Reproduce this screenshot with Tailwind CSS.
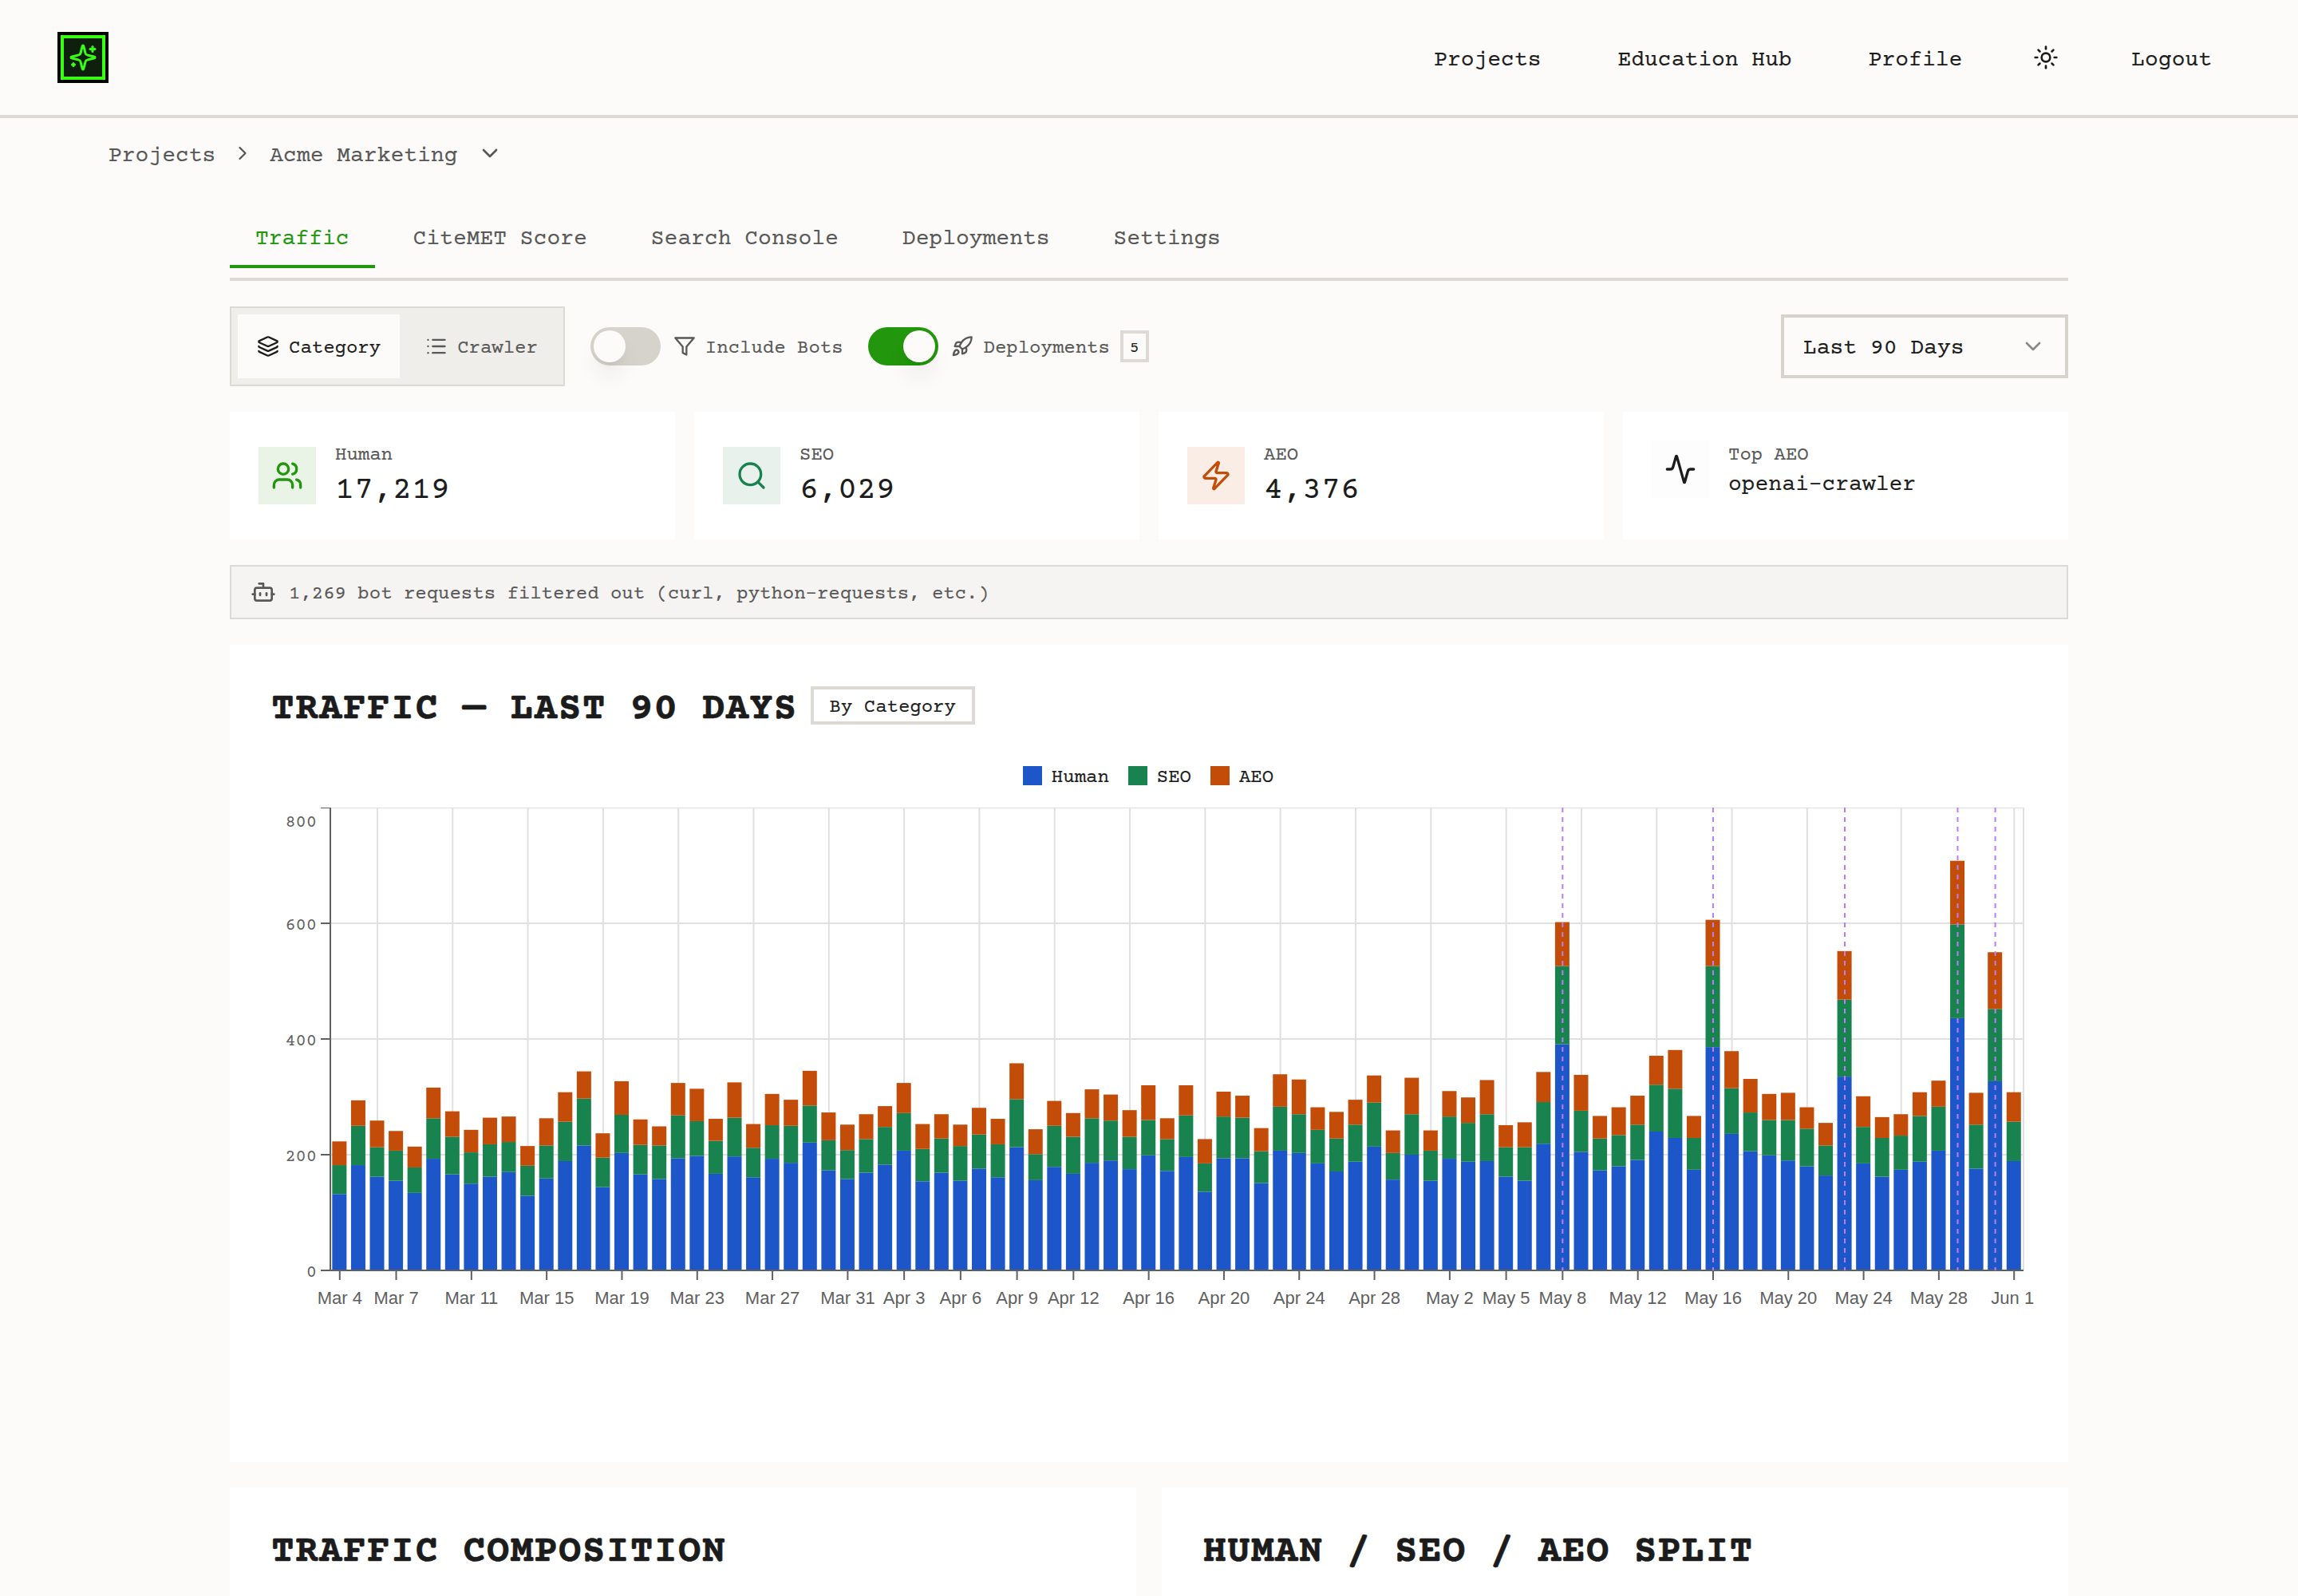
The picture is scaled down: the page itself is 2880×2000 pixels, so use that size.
<!DOCTYPE html>
<html lang="en">
<head>
  <meta charset="UTF-8">
  <meta name="viewport" content="width=device-width, initial-scale=1.0">
  <title>Acme Marketing - Traffic</title>
  <script src="https://cdn.jsdelivr.net/npm/@tailwindcss/browser@4"></script>
</head>
<body class="h-[2000px] overflow-hidden bg-[#fcfbf9] font-['Courier_Prime','Liberation_Mono',monospace] text-[28px] text-[#1c1c1c] [-webkit-text-stroke:0.15px]">

  <header class="flex h-37 items-center justify-between border-b-4 border-[#dddad5] pr-[76px] pl-18">
    <a class="block size-16 bg-black p-1" href="#">
      <div class="flex size-14 items-center justify-center border-4 border-[#39ff14] bg-[#0f1f0d]">
        <svg class="size-9 shrink-0 text-[#39ff14]" viewBox="0 0 24 24" fill="none" stroke="currentColor" stroke-width="2" stroke-linecap="round" stroke-linejoin="round"><path d="M9.937 15.5A2 2 0 0 0 8.5 14.063l-6.135-1.582a.5.5 0 0 1 0-.962L8.5 9.936A2 2 0 0 0 9.937 8.5l1.582-6.135a.5.5 0 0 1 .963 0L14.063 8.5A2 2 0 0 0 15.5 9.937l6.135 1.581a.5.5 0 0 1 0 .964L15.5 14.063a2 2 0 0 0-1.437 1.437l-1.582 6.135a.5.5 0 0 1-.963 0z"/><path d="M20 3v4"/><path d="M22 5h-4"/><path d="M4 17v2"/><path d="M5 18H3"/></svg>
      </div>
    </a>
    <nav class="flex items-center gap-8 leading-10">
      <a class="px-8 pt-[7px]" href="#">Projects</a>
      <a class="px-8 pt-[7px]" href="#">Education Hub</a>
      <a class="px-8 pt-[7px]" href="#">Profile</a>
      <button class="flex w-21 justify-center pr-0.5">
        <svg class="size-8" viewBox="0 0 24 24" fill="none" stroke="currentColor" stroke-width="2" stroke-linecap="round" stroke-linejoin="round"><circle cx="12" cy="12" r="4"/><path d="M12 2v2"/><path d="M12 20v2"/><path d="m4.93 4.93 1.41 1.41"/><path d="m17.66 17.66 1.41 1.41"/><path d="M2 12h2"/><path d="M20 12h2"/><path d="m6.34 17.66-1.41 1.41"/><path d="m19.07 4.93-1.41 1.41"/></svg>
      </button>
      <a class="px-8 pt-[7px]" href="#">Logout</a>
    </nav>
  </header>

  <div class="flex h-22 items-center pl-34 leading-10 text-[#585858]">
    <a class="pt-[7px]" href="#">Projects</a>
    <svg class="mx-5 size-7" viewBox="0 0 24 24" fill="none" stroke="currentColor" stroke-width="2" stroke-linecap="round" stroke-linejoin="round"><path d="m9 18 6-6-6-6"/></svg>
    <span class="pt-[7px]">Acme Marketing</span>
    <svg class="ml-[25px] size-8" viewBox="0 0 24 24" fill="none" stroke="currentColor" stroke-width="2" stroke-linecap="round" stroke-linejoin="round"><path d="m6 9 6 6 6-6"/></svg>
  </div>

  <main class="mx-auto w-[2304px]">
    <div class="flex h-29 items-end gap-4 border-b-4 border-[#dddad5] pb-3 leading-10 text-[#585858]">
      <a class="border-b-4 border-[#22960d] px-8 pb-3 text-[#22960d]" href="#">Traffic</a>
      <a class="border-b-4 border-transparent px-8 pb-3" href="#">CiteMET Score</a>
      <a class="border-b-4 border-transparent px-8 pb-3" href="#">Search Console</a>
      <a class="border-b-4 border-transparent px-8 pb-3" href="#">Deployments</a>
      <a class="border-b-4 border-transparent px-8 pb-3" href="#">Settings</a>
    </div>

    <div class="mt-8 flex h-25 items-center text-2xl text-[#585858]">
      <div class="flex h-25 gap-2 border-2 border-[#dbdad4] bg-[#efeeea] p-2">
        <button class="flex items-center gap-3 bg-[#fcfbf9] px-6 text-[#1c1c1c]">
          <svg class="size-7" viewBox="0 0 24 24" fill="none" stroke="currentColor" stroke-width="2" stroke-linecap="round" stroke-linejoin="round"><path d="M12.83 2.18a2 2 0 0 0-1.66 0L2.6 6.08a1 1 0 0 0 0 1.83l8.58 3.91a2 2 0 0 0 1.66 0l8.58-3.9a1 1 0 0 0 0-1.83z"/><path d="M2 12a1 1 0 0 0 .58.91l8.6 3.91a2 2 0 0 0 1.65 0l8.58-3.9A1 1 0 0 0 22 12"/><path d="M2 17a1 1 0 0 0 .58.91l8.6 3.91a2 2 0 0 0 1.65 0l8.58-3.9A1 1 0 0 0 22 17"/></svg>
          <span class="pt-[5px]">Category</span>
        </button>
        <button class="flex items-center gap-3 px-6">
          <svg class="size-7" viewBox="0 0 24 24" fill="none" stroke="currentColor" stroke-width="2" stroke-linecap="round" stroke-linejoin="round"><path d="M3 5h.01"/><path d="M3 12h.01"/><path d="M3 19h.01"/><path d="M8 5h13"/><path d="M8 12h13"/><path d="M8 19h13"/></svg>
          <span class="pt-[5px]">Crawler</span>
        </button>
      </div>

      <button class="ml-8 flex h-12 w-22 rounded-full bg-[#d5d3cb] p-1">
        <span class="size-10 rounded-full bg-[#fcfbf9] shadow-[0_20px_30px_-6px_rgb(0_0_0/0.1),0_8px_12px_-8px_rgb(0_0_0/0.1)]"></span>
      </button>
      <svg class="mr-3 ml-4 size-7" viewBox="0 0 24 24" fill="none" stroke="currentColor" stroke-width="2" stroke-linecap="round" stroke-linejoin="round"><path d="M22 3H2l8 9.46V19l4 2v-8.54L22 3z"/></svg>
      <span class="pt-[5px]">Include Bots</span>

      <button class="ml-[31px] flex h-12 w-22 justify-end rounded-full bg-[#22960d] p-1">
        <span class="size-10 rounded-full bg-[#fcfbf9] shadow-[0_20px_30px_-6px_rgb(0_0_0/0.1),0_8px_12px_-8px_rgb(0_0_0/0.1)]"></span>
      </button>
      <svg class="mr-[13px] ml-4 size-7" viewBox="0 0 24 24" fill="none" stroke="currentColor" stroke-width="2" stroke-linecap="round" stroke-linejoin="round"><path d="M4.5 16.5c-1.5 1.26-2 5-2 5s3.74-.5 5-2c.71-.84.7-2.13-.09-2.91a2.18 2.18 0 0 0-2.91-.09z"/><path d="m12 15-3-3a22 22 0 0 1 2-3.95A12.88 12.88 0 0 1 22 2c0 2.72-.78 7.5-6 11a22.35 22.35 0 0 1-4 2z"/><path d="M9 12H4s.55-3.03 2-4c1.62-1.08 5 0 5 0"/><path d="M12 15v5s3.03-.55 4-2c1.08-1.62 0-5 0-5"/></svg>
      <span class="pt-[5px]">Deployments</span>
      <span class="ml-[13px] flex h-10 items-center border-4 border-[#dddad5] px-2 pt-[5px] text-xl text-[#1c1c1c]">5</span>

      <button class="ml-auto flex h-20 w-90 items-center justify-between border-4 border-[#d5d3cb] px-6 text-[28px] text-[#1c1c1c]">
        <span class="pt-2">Last 90 Days</span>
        <svg class="size-8 text-[#888]" viewBox="0 0 24 24" fill="none" stroke="currentColor" stroke-width="2" stroke-linecap="round" stroke-linejoin="round"><path d="m6 9 6 6 6-6"/></svg>
      </button>
    </div>

    <div class="mt-8 grid h-40 grid-cols-4 gap-6">
      <div class="bg-white p-9">
        <div class="flex items-center gap-6">
          <div class="flex size-18 items-center justify-center bg-[#e9f4e7] text-[#22960d]">
            <svg class="size-10" viewBox="0 0 24 24" fill="none" stroke="currentColor" stroke-width="2" stroke-linecap="round" stroke-linejoin="round"><path d="M16 21v-2a4 4 0 0 0-4-4H6a4 4 0 0 0-4 4v2"/><circle cx="9" cy="7" r="4"/><path d="M22 21v-2a4 4 0 0 0-3-3.87"/><path d="M16 3.13a4 4 0 0 1 0 7.75"/></svg>
          </div>
          <div>
            <p class="h-8 text-2xl leading-[37px] text-[#585858]">Human</p>
            <p class="h-14 text-[40px] leading-[63px]">17,219</p>
          </div>
        </div>
      </div>
      <div class="bg-white p-9">
        <div class="flex items-center gap-6">
          <div class="flex size-18 items-center justify-center bg-[#e8f1ec] text-[#18834f]">
            <svg class="size-10" viewBox="0 0 24 24" fill="none" stroke="currentColor" stroke-width="2" stroke-linecap="round" stroke-linejoin="round"><circle cx="11" cy="11" r="8"/><path d="m21 21-4.3-4.3"/></svg>
          </div>
          <div>
            <p class="h-8 text-2xl leading-[37px] text-[#585858]">SEO</p>
            <p class="h-14 text-[40px] leading-[63px]">6,029</p>
          </div>
        </div>
      </div>
      <div class="bg-white p-9">
        <div class="flex items-center gap-6">
          <div class="flex size-18 items-center justify-center bg-[#faede6] text-[#c34c09]">
            <svg class="size-10" viewBox="0 0 24 24" fill="none" stroke="currentColor" stroke-width="2" stroke-linecap="round" stroke-linejoin="round"><path d="M4 14a1 1 0 0 1-.78-1.63l9.9-10.2a.5.5 0 0 1 .86.46l-1.92 6.02A1 1 0 0 0 13 10h7a1 1 0 0 1 .78 1.63l-9.9 10.2a.5.5 0 0 1-.86-.46l1.92-6.02A1 1 0 0 0 11 14z"/></svg>
          </div>
          <div>
            <p class="h-8 text-2xl leading-[37px] text-[#585858]">AEO</p>
            <p class="h-14 text-[40px] leading-[63px]">4,376</p>
          </div>
        </div>
      </div>
      <div class="bg-white p-9">
        <div class="flex items-center gap-6">
          <div class="flex size-18 items-center justify-center bg-[#fefdfd]">
            <svg class="size-10" viewBox="0 0 24 24" fill="none" stroke="currentColor" stroke-width="2" stroke-linecap="round" stroke-linejoin="round"><path d="M22 12h-2.48a2 2 0 0 0-1.93 1.46l-2.35 8.36a.25.25 0 0 1-.48 0L9.24 2.18a.25.25 0 0 0-.48 0l-2.35 8.36A2 2 0 0 1 4.49 12H2"/></svg>
          </div>
          <div>
            <p class="h-8 text-2xl leading-[37px] text-[#585858]">Top AEO</p>
            <p class="h-10 leading-[48px]">openai-crawler</p>
          </div>
        </div>
      </div>
    </div>

    <div class="mt-8 flex h-17 items-center gap-4 border-2 border-[#dbdad4] bg-[#f5f4f2] px-6 text-2xl text-[#585858]">
      <svg class="size-8" viewBox="0 0 24 24" fill="none" stroke="currentColor" stroke-width="2" stroke-linecap="round" stroke-linejoin="round"><path d="M12 8V4H8"/><rect width="16" height="12" x="4" y="8" rx="2"/><path d="M2 14h2"/><path d="M20 14h2"/><path d="M15 13v2"/><path d="M9 13v2"/></svg>
      <span class="pt-[5px]">1,269 bot requests filtered out (curl, python-requests, etc.)</span>
    </div>

    <section class="mt-8 h-[1024px] bg-white p-13">
      <div class="flex h-12 items-start gap-4">
        <h2 class="text-5xl leading-[59px] font-bold tracking-wide [-webkit-text-stroke:0.5px]">TRAFFIC — LAST 90 DAYS</h2>
        <span class="flex h-12 items-center border-4 border-[#dddad5] px-5 pt-[5px] text-2xl">By Category</span>
      </div>
      <div class="mt-[52px] flex h-6 items-center justify-center gap-6 pr-0.5 text-2xl">
        <span class="flex items-center gap-3"><i class="size-6 bg-[#1d56c9]"></i><span class="pt-[5px]">Human</span></span>
        <span class="flex items-center gap-3"><i class="size-6 bg-[#18834f]"></i><span class="pt-[5px]">SEO</span></span>
        <span class="flex items-center gap-3"><i class="size-6 bg-[#c34c09]"></i><span class="pt-[5px]">AEO</span></span>
      </div>
      <svg id="chart" class="mt-4 block overflow-visible" width="2200" height="660" viewBox="340 1000 2200 660"></svg>
    </section>

    <div class="mt-8 grid grid-cols-2 gap-8">
      <section class="h-34 bg-white px-13 pt-13">
        <h2 class="text-5xl leading-[59px] font-bold tracking-wide [-webkit-text-stroke:0.5px]">TRAFFIC COMPOSITION</h2>
      </section>
      <section class="h-34 bg-white px-13 pt-13">
        <h2 class="text-5xl leading-[59px] font-bold tracking-wide [-webkit-text-stroke:0.5px]">HUMAN / SEO / AEO SPLIT</h2>
      </section>
    </div>
  </main>

  <script>
    // one entry per day from Mar 4: human, seo, aeo
    var days = [
      [132,50,41],[182,68,44],[162,51,46],[155,52,34],[134,44,36],[193,70,53],[166,65,44],[150,54,39],[162,56,46],[170,52,44],
      [129,52,34],[159,57,47],[189,68,51],[216,81,47],[144,51,42],[203,66,58],[166,51,44],[158,58,33],[194,74,56],[198,60,56],
      [167,57,38],[197,67,61],[161,51,41],[193,58,54],[186,64,45],[221,64,60],[173,52,48],[158,50,44],[169,58,43],[183,65,36],
      [207,65,52],[154,56,43],[169,59,42],[155,60,37],[176,59,46],[161,57,44],[213,83,62],[156,45,43],[179,71,43],[167,64,41],
      [186,77,50],[190,69,45],[175,56,46],[199,61,60],[172,55,36],[196,72,52],[136,49,42],[194,72,43],[194,70,38],[151,55,40],
      [207,76,56],[203,67,60],[185,58,39],[171,57,46],[188,64,43],[214,76,47],[157,46,39],[200,70,63],[155,52,35],[193,73,44],
      [188,67,44],[189,81,59],[162,51,38],[155,58,43],[219,72,52],[391,135,76],[205,71,62],[173,55,39],[180,54,48],[191,61,50],
      [240,81,50],[229,85,67],[174,55,38],[386,140,80],[236,79,64],[206,67,58],[199,61,45],[190,70,47],[180,65,37],[164,52,39],
      [335,133,84],[185,63,53],[162,67,36],[174,59,37],[188,79,41],[207,76,45],[436,162,110],[176,76,55],[327,125,98],[189,68,51]
    ]
    var colors = ['#1d56c9', '#18834f', '#c34c09']
    var labels = {
      0: 'Mar 4', 3: 'Mar 7', 7: 'Mar 11', 11: 'Mar 15', 15: 'Mar 19', 19: 'Mar 23', 23: 'Mar 27', 27: 'Mar 31',
      30: 'Apr 3', 33: 'Apr 6', 36: 'Apr 9', 39: 'Apr 12', 43: 'Apr 16', 47: 'Apr 20', 51: 'Apr 24', 55: 'Apr 28',
      59: 'May 2', 62: 'May 5', 65: 'May 8', 69: 'May 12', 73: 'May 16', 77: 'May 20', 81: 'May 24', 85: 'May 28', 89: 'Jun 1'
    }
    var gridDays = [2, 6, 10, 14, 18, 22, 26, 30, 34, 38, 42, 46, 50, 54, 58, 62, 66, 70, 74, 78, 83, 89]
    var deployDays = [65, 73, 80, 86, 88]

    var left = 414, right = 2536, top0 = 1012, bottom = 1592
    var band = (right - left) / days.length
    var center = i => left + (i + 0.5) * band
    var y = v => bottom - v * (bottom - top0) / 800

    function line(x1, y1, x2, y2, cls) {
      return `<line x1="${x1}" y1="${y1}" x2="${x2}" y2="${y2}" class="${cls}"/>`
    }

    var out = ''
    // grid
    out += `<rect x="${left}" y="${top0}" width="${right - left + 1}" height="1" class="fill-[#e0e0e0]"/>`
    ;[200, 400, 600].forEach(v => { out += line(left, y(v), right, y(v), 'stroke-[#e0e0e0] stroke-2') })
    gridDays.forEach(i => { out += line(center(i), top0, center(i), bottom, 'stroke-[#e0e0e0] stroke-2') })
    out += line(right, top0, right, bottom, 'stroke-[#e0e0e0] stroke-2')

    // stacked bars
    days.forEach((day, i) => {
      var sum = 0
      day.forEach((v, k) => {
        out += `<rect x="${left + i * band + band * 0.1}" y="${y(sum + v)}" width="18" height="${y(sum) - y(sum + v)}" fill="${colors[k]}"/>`
        sum += v
      })
    })

    // axes
    out += `<rect x="${left - 1}" y="${top0}" width="2" height="${bottom - top0 + 1}" class="fill-[#606060]"/>`
    out += line(left, bottom, right, bottom, 'stroke-[#606060] stroke-2')
    ;[0, 200, 400, 600, 800].forEach(v => {
      out += v == 800
        ? `<rect x="${left - 12}" y="${top0}" width="12" height="1" class="fill-[#606060]"/>`
        : line(left - 12, y(v), left, y(v), 'stroke-[#606060] stroke-2')
      out += `<text x="397" y="${v == 800 ? 1036 : y(v) + 8}" text-anchor="end" class="fill-[#606060] text-[22px]">${v}</text>`
    })
    Object.keys(labels).forEach(i => {
      var x = center(+i)
      out += line(x, bottom, x, bottom + 12, 'stroke-[#606060] stroke-2')
      out += `<text x="${i == 89 ? x - 2 : x}" y="1634" text-anchor="middle" class="fill-[#606060] font-['Liberation_Sans',sans-serif] text-[22px]">${labels[i]}</text>`
    })

    // deployment markers
    deployDays.forEach(i => {
      out += `<line x1="${center(i)}" y1="${top0}" x2="${center(i)}" y2="${bottom}" stroke-dasharray="6 6" class="stroke-[#b87ff0] stroke-2"/>`
    })
    document.querySelector('#chart').innerHTML = out
  </script>
</body>
</html>
